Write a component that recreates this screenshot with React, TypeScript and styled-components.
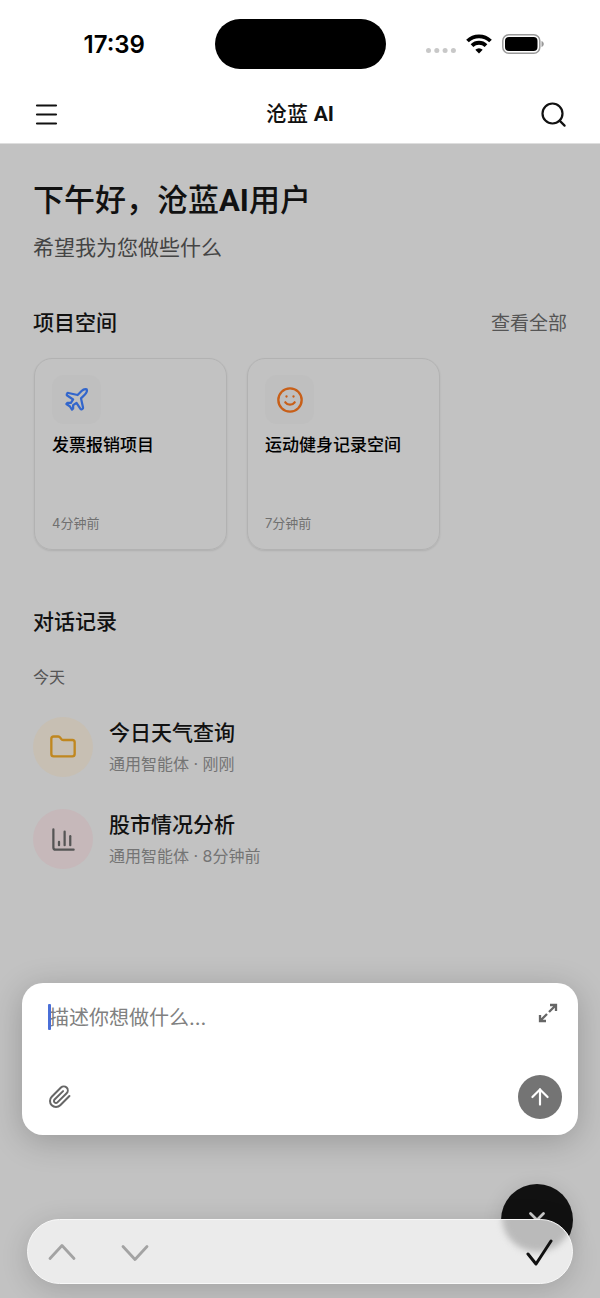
import React from "react";
import styled, { createGlobalStyle } from "styled-components";
import { ArrowUp, ChartColumn, Folder, Plane, Smile } from "lucide-react";

const GlobalStyle = createGlobalStyle`
  * { box-sizing: border-box; }
  body {
    margin: 0;
    background: #c2c2c2;
    color: #111;
    font-family: Inter, "Noto Sans CJK SC", sans-serif;
  }
  h1, h2, h3, p { margin: 0; }
  button { border: 0; padding: 0; background: none; color: inherit; font: inherit; display: flex; align-items: center; justify-content: center; }
  svg { display: block; flex: none; }
`;

const Page = styled.div`
  min-height: 100vh;
  display: flex;
  flex-direction: column;
`;

const Top = styled.header`
  background: #fff;
  border-bottom: 1px solid #dedede;
`;

const StatusBar = styled.div`
  height: 88px;
  display: grid;
  grid-template-columns: 1fr 171px 1fr;
  align-items: center;
`;

const Clock = styled.time`
  justify-self: center;
  padding: 2px 0 0 14px;
  font-size: 24px;
  line-height: 32px;
  font-weight: 600;
  color: #000;
`;

const Island = styled.div`
  height: 50px;
  border-radius: 25px;
  background: #000;
`;

const Signals = styled.div`
  justify-self: end;
  display: flex;
  align-items: center;
  gap: 10px;
  padding-right: 56px;
`;

const NavBar = styled.nav`
  height: 55px;
  padding: 0 33px 3px;
  display: grid;
  grid-template-columns: 1fr auto 1fr;
  align-items: center;
`;

const NavTitle = styled.h1`
  font-size: 21px;
  line-height: 28px;
  font-weight: 500;
`;

const Latin = styled.span`
  font-family: Roboto, sans-serif;
  font-weight: 700;
`;

const IconButton = styled.button<{ $end?: boolean }>`
  width: 27px;
  height: 27px;
  justify-self: ${(p) => (p.$end ? "end" : "start")};
`;

const Main = styled.main`
  flex: 1;
  padding: 36px 33px 40px;
`;

const Greeting = styled.h2`
  font-size: 31px;
  line-height: 40px;
  font-weight: 500;
`;

const Subtitle = styled.p`
  margin-top: 12px;
  font-size: 21px;
  line-height: 30px;
  color: #444;
`;

const SectionHead = styled.div<{ $gap: number }>`
  margin-top: ${(p) => p.$gap}px;
  display: flex;
  align-items: flex-end;
  justify-content: space-between;
`;

const SectionTitle = styled.h2`
  font-size: 21px;
  line-height: 30px;
  font-weight: 500;
`;

const MoreLink = styled.a`
  font-size: 19px;
  line-height: 28px;
  color: #555;
  text-decoration: none;
`;

const Cards = styled.div`
  margin: 20px 0 0 1px;
  display: flex;
  gap: 20px;
`;

const Card = styled.article`
  width: 193px;
  height: 192px;
  padding: 16px 17px;
  display: flex;
  flex-direction: column;
  border: 1px solid #b2b2b2;
  border-radius: 18px;
  box-shadow: 0 1px 2px rgba(0, 0, 0, 0.1);
`;

const CardIcon = styled.div<{ $color: string }>`
  width: 49px;
  height: 49px;
  border-radius: 12px;
  display: grid;
  place-items: center;
  background: #bfbfbf;
  color: ${(p) => p.$color};
`;

const CardTitle = styled.h3`
  margin-top: 8px;
  font-size: 17px;
  line-height: 26px;
  font-weight: 500;
  color: #000;
`;

const CardTime = styled.p`
  margin-top: auto;
  font-size: 13px;
  line-height: 20px;
  color: #707070;
`;

const DayLabel = styled.p`
  margin: 28px 0 28px;
  font-size: 16px;
  line-height: 24px;
  color: #555;
`;

const ChatList = styled.ul`
  margin: 0;
  padding: 0;
  list-style: none;
  display: grid;
  gap: 32px;
`;

const ChatRow = styled.li`
  display: flex;
  align-items: center;
  gap: 16px;
`;

const Avatar = styled.div<{ $bg: string; $fg: string }>`
  width: 60px;
  height: 60px;
  border-radius: 50%;
  display: grid;
  place-items: center;
  background: ${(p) => p.$bg};
  color: ${(p) => p.$fg};
`;

const ChatTitle = styled.h3`
  font-size: 21px;
  line-height: 32px;
  font-weight: 500;
`;

const ChatMeta = styled.p`
  padding-top: 2px;
  font-size: 16px;
  line-height: 26px;
  color: #747474;
`;

const Composer = styled.form`
  margin: 0 22px;
  height: 152px;
  padding: 18px 16px 16px 26px;
  display: flex;
  flex-direction: column;
  justify-content: space-between;
  background: #fff;
  border-radius: 21px;
  box-shadow: 0 6px 32px rgba(0, 0, 0, 0.22);
`;

const ComposerRow = styled.div`
  display: flex;
  align-items: flex-start;
  justify-content: space-between;
`;

const ToolRow = styled(ComposerRow)`
  align-items: center;
`;

const Field = styled.label`
  position: relative;
  flex: 1;
`;

const Caret = styled.span`
  position: absolute;
  left: 0;
  top: 3px;
  width: 3px;
  height: 26px;
  border-radius: 1px;
  background: #4a6fd8;
`;

const Prompt = styled.textarea`
  display: block;
  width: 100%;
  height: 32px;
  padding: 1px 0 0 1px;
  border: 0;
  outline: 0;
  resize: none;
  overflow: hidden;
  background: none;
  color: #111;
  font: 20px/32px Inter, "Noto Sans CJK SC", sans-serif;
  &::placeholder { color: #808080; opacity: 1; }
`;

const ToolButton = styled.button`
  width: 28px;
  height: 24px;
  color: #666;
`;

const AttachButton = styled(ToolButton)`
  width: 24px;
`;

const SendButton = styled.button`
  width: 44px;
  height: 44px;
  border-radius: 50%;
  background: #747474;
  color: #fff;
`;

const Dock = styled.footer`
  position: relative;
  margin: 84px 27px 14px;
`;

const Fab = styled.button`
  position: absolute;
  right: 0;
  top: -35px;
  width: 72px;
  height: 72px;
  border-radius: 50%;
  background: #111;
  color: #ccc;
  box-shadow: 0 4px 20px rgba(0, 0, 0, 0.15);
`;

const KeyBar = styled.div`
  position: relative;
  height: 65px;
  padding: 0 19px 0 20px;
  display: flex;
  align-items: center;
  gap: 45px;
  overflow: hidden;
  border: 1px solid #f8f8f8;
  border-radius: 33px;
  background: #ebebeb;
  box-shadow: 0 6px 28px rgba(0, 0, 0, 0.16);
`;

const BarShade = styled.span`
  position: absolute;
  right: 0;
  top: -38px;
  width: 70px;
  height: 70px;
  border-radius: 50%;
  background: #bababa;
  filter: blur(3px);
`;

const KeyButton = styled.button<{ $done?: boolean }>`
  position: relative;
  width: 28px;
  height: 32px;
  margin-left: ${(p) => (p.$done ? "auto" : "0")};
  color: ${(p) => (p.$done ? "#111" : "#a3a3a3")};
`;

const chats = [
  { title: "今日天气查询", meta: "通用智能体 · 刚刚", bg: "#c7bfb3", fg: "#c0871f", icon: <Folder size={28} strokeWidth={2} /> },
  { title: "股市情况分析", meta: "通用智能体 · 8分钟前", bg: "#c6b8ba", fg: "#555", icon: <ChartColumn size={27} strokeWidth={2} /> },
];

const projects = [
  { title: "发票报销项目", time: "4分钟前", color: "#3266cc", icon: <Plane size={27} strokeWidth={2} /> },
  { title: "运动健身记录空间", time: "7分钟前", color: "#c85f18", icon: <Smile size={28} strokeWidth={2} /> },
];

export default function App() {
  return (
    <Page lang="zh-CN">
      <GlobalStyle />
      <Top>
        <StatusBar>
          <Clock>17:39</Clock>
          <Island />
          <Signals>
            <svg width="30" height="20" fill="#c8c8c8">
              <circle cx="2.5" cy="16.5" r="2.5" />
              <circle cx="10.8" cy="16.5" r="2.5" />
              <circle cx="19.1" cy="16.5" r="2.5" />
              <circle cx="27.4" cy="16.5" r="2.5" />
            </svg>
            <svg width="26" height="20" viewBox="0 0 26 20" fill="none" stroke="#000" strokeWidth="3.8">
              <path d="M1.5 7A16.5 16.5 0 0 1 24.5 7M6 11.6A10 10 0 0 1 20 11.6" />
              <path d="M13 19.5L9.3 15.8A5.3 5.3 0 0 1 16.7 15.8Z" fill="#000" stroke="none" />
            </svg>
            <svg width="42" height="20" viewBox="0 0 42 20">
              <rect x="0.8" y="0.8" width="37" height="18.4" rx="6" fill="none" stroke="#999" strokeWidth="1.5" />
              <rect x="3" y="3" width="32.5" height="14" rx="4" />
              <path d="M39.5 7v6c3-1 3-5 0-6z" fill="#999" />
            </svg>
          </Signals>
        </StatusBar>
        <NavBar>
          <IconButton aria-label="菜单">
            <svg width="27" height="27" viewBox="0 0 27 27" stroke="#111" strokeWidth="2.2" strokeLinecap="round">
              <path d="M4 4.5h19M4 13.5h19M4 22.5h19" />
            </svg>
          </IconButton>
          <NavTitle>沧蓝 <Latin>AI</Latin></NavTitle>
          <IconButton $end aria-label="搜索">
            <svg width="27" height="27" viewBox="0 0 27 27" fill="none" stroke="#111" strokeWidth="2.2" strokeLinecap="round">
              <circle cx="12.5" cy="12.5" r="10" />
              <path d="M19.6 19.6l5 5" />
            </svg>
          </IconButton>
        </NavBar>
      </Top>
      <Main>
        <Greeting>下午好，沧蓝<Latin>AI</Latin>用户</Greeting>
        <Subtitle>希望我为您做些什么</Subtitle>
        <SectionHead $gap={45}>
          <SectionTitle>项目空间</SectionTitle>
          <MoreLink href="#projects">查看全部</MoreLink>
        </SectionHead>
        <Cards>
          {projects.map((p) => (
            <Card key={p.title}>
              <CardIcon $color={p.color}>{p.icon}</CardIcon>
              <CardTitle>{p.title}</CardTitle>
              <CardTime>{p.time}</CardTime>
            </Card>
          ))}
        </Cards>
        <SectionHead $gap={57}>
          <SectionTitle>对话记录</SectionTitle>
        </SectionHead>
        <DayLabel>今天</DayLabel>
        <ChatList>
          {chats.map((c) => (
            <ChatRow key={c.title}>
              <Avatar $bg={c.bg} $fg={c.fg}>{c.icon}</Avatar>
              <div>
                <ChatTitle>{c.title}</ChatTitle>
                <ChatMeta>{c.meta}</ChatMeta>
              </div>
            </ChatRow>
          ))}
        </ChatList>
      </Main>
      <Composer>
        <ComposerRow>
          <Field>
            <Prompt aria-label="描述" placeholder="描述你想做什么..." />
            <Caret />
          </Field>
          <ToolButton type="button" aria-label="展开">
            <svg width="20" height="20" viewBox="0 0 20 20" fill="none" stroke="currentColor" strokeWidth="2.3">
              <path d="M12 2h6v6M18 2l-7 7M8 18H2v-6M2 18l7-7" />
            </svg>
          </ToolButton>
        </ComposerRow>
        <ToolRow>
          <AttachButton type="button" aria-label="附件">
            <svg width="24" height="24" viewBox="0 0 24 24" fill="none" stroke="currentColor" strokeWidth="2" strokeLinecap="round" strokeLinejoin="round">
              <path d="m21.44 11.05-9.19 9.19a6 6 0 0 1-8.49-8.49l9.19-9.19a4 4 0 0 1 5.66 5.66l-9.2 9.19a2 2 0 0 1-2.83-2.83l8.49-8.48" />
            </svg>
          </AttachButton>
          <SendButton type="button" aria-label="发送"><ArrowUp size={26} /></SendButton>
        </ToolRow>
      </Composer>
      <Dock>
        <Fab aria-label="收起">
          <svg width="18" height="18" viewBox="0 0 18 18" fill="none" stroke="currentColor" strokeWidth="2.8" strokeLinecap="round">
            <path d="M2.5 2.5l13 13M15.5 2.5l-13 13" />
          </svg>
        </Fab>
        <KeyBar>
          <BarShade />
          <KeyButton aria-label="上一项">
            <svg width="28" height="32" viewBox="0 0 28 32" fill="none" stroke="currentColor" strokeWidth="2.8" strokeLinecap="round" strokeLinejoin="round">
              <path d="M2 22.5L14 9.5L26 22.5" />
            </svg>
          </KeyButton>
          <KeyButton aria-label="下一项">
            <svg width="28" height="32" viewBox="0 0 28 32" fill="none" stroke="currentColor" strokeWidth="2.8" strokeLinecap="round" strokeLinejoin="round">
              <path d="M2 10.5L14 23.5L26 10.5" />
            </svg>
          </KeyButton>
          <KeyButton $done aria-label="完成">
            <svg width="28" height="32" viewBox="0 0 28 32" fill="none" stroke="currentColor" strokeWidth="3" strokeLinecap="round" strokeLinejoin="round">
              <path d="M3 18L11 28L26 5" />
            </svg>
          </KeyButton>
        </KeyBar>
      </Dock>
    </Page>
  );
}
